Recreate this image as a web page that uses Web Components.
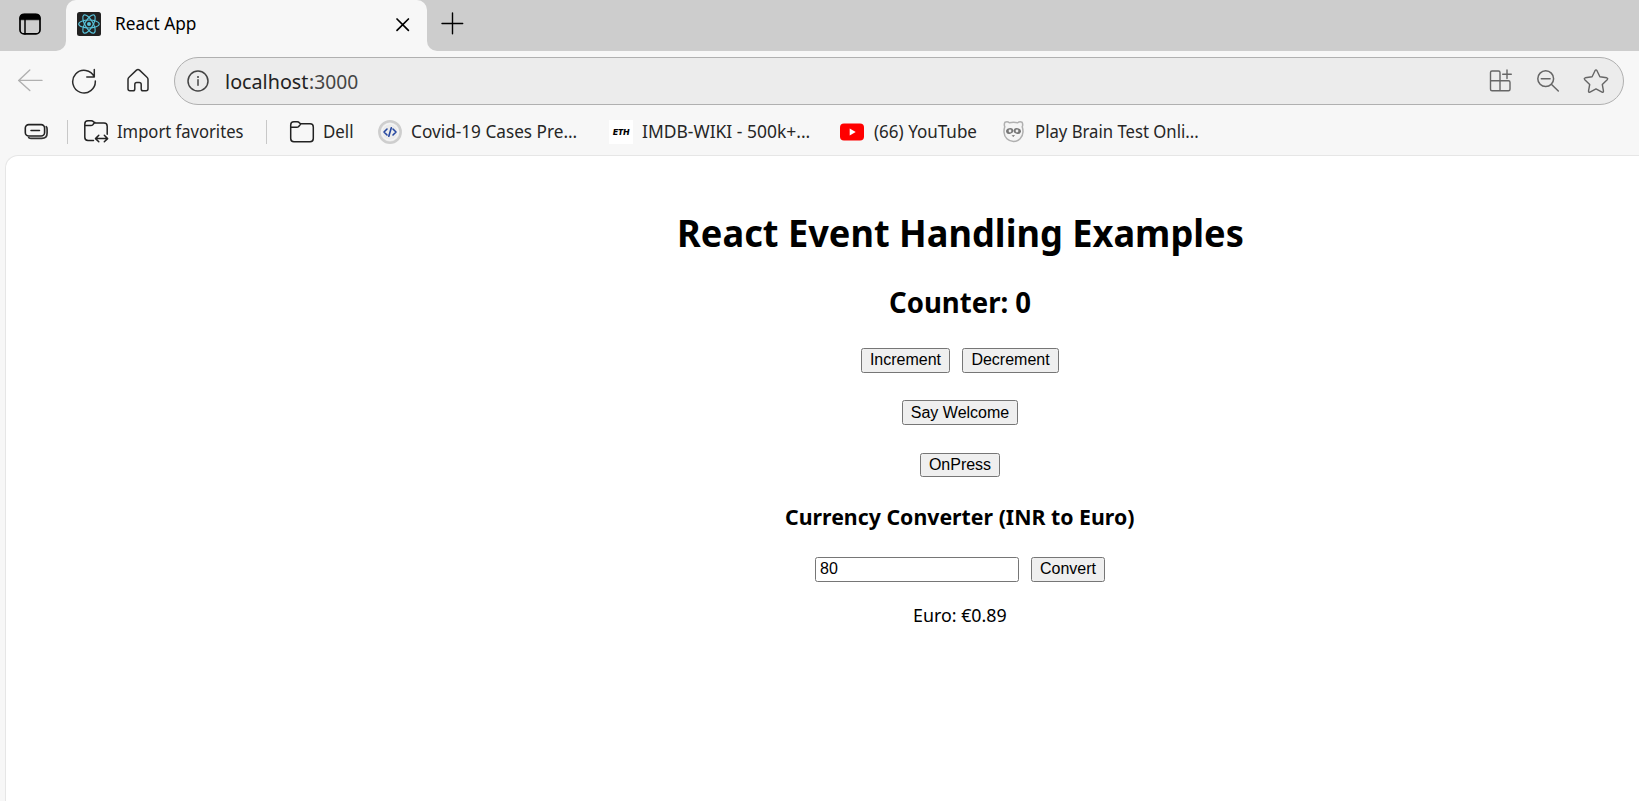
<!DOCTYPE html>
<html lang="en">
<head>
<meta charset="utf-8">
<title>React App</title>
<style>
html,body{margin:0;height:100%;overflow:hidden;background:#f7f7f7;font-family:"Noto Sans","Open Sans",sans-serif;color:#000}
</style>
</head>
<body>
<browser-window></browser-window>
<script>
const shadow = (el, html) => { const t = document.createElement('template'); t.innerHTML = html; el.attachShadow({mode:'open'}).append(t.content.cloneNode(true)); };

/* A single line of text whose glyphs span exactly `w` pixels. */
class FitText extends HTMLElement {
  connectedCallback(){
    const w = +this.getAttribute('w');
    shadow(this, `<style>:host{display:block;flex:none;width:${w}px;white-space:nowrap}span{display:inline-block;transform-origin:0 50%}</style><span><slot></slot></span>`);
    const cs = getComputedStyle(this), c = document.createElement('canvas').getContext('2d');
    c.font = `${cs.fontWeight} ${cs.fontSize} ${cs.fontFamily}`;
    const m = c.measureText(this.textContent.trim()), l = m.actualBoundingBoxLeft, s = w / (l + m.actualBoundingBoxRight);
    this.shadowRoot.querySelector('span').style.transform = `translateX(${l*s}px) scaleX(${s})`;
  }
}

/* Icons share the window's pixel grid through their viewBox. */
const icons = {
  workspaces:['18 12 24 24','<rect x="20" y="14.3" width="20" height="19.6" rx="4" stroke-width="1.7"/><path d="M20 19.3V18q0-3.7 4-3.7h12q4 0 4 3.7v1.3z" fill="#000"/><path d="M25 19v15" stroke-width="1.5"/>'],
  react:['77 12 24 24','<rect x="77" y="12" width="24" height="24" rx="2.5" fill="#222" stroke="none"/><g stroke="#58c4dc" stroke-width="1.15"><ellipse cx="89" cy="24" rx="10.3" ry="4"/><ellipse cx="89" cy="24" rx="10.3" ry="4" transform="rotate(60 89 24)"/><ellipse cx="89" cy="24" rx="10.3" ry="4" transform="rotate(120 89 24)"/></g><circle cx="89" cy="24" r="2" fill="#58c4dc" stroke="none"/>'],
  close:['395 17 16 16','<path d="M397 19l11.4 11.4M408.400 19L397 30.400" stroke-width="1.7"/>'],
  plus:['441 12 23 23','<path d="M442 23.500h20.700M452.500 13v20.700" stroke-width="1.4"/>'],
  back:['17 68 26 26','<path d="M42 80.400H18.600M29.800 70L18.700 80.400l11.100 10.200" stroke="#b0b0b0" stroke-width="1.4"/>'],
  refresh:['71 68 26 26','<path d="M94.300 77A11.300 11.300 0 1 0 95.300 81M94.300 69.500V77h-7.500" stroke="#2b2b2b" stroke-width="1.5"/>'],
  home:['125 68 26 26','<path d="M128 79.600q0-1.400 1-2.300l7.500-7.200q1.500-1.300 3 0l7.500 7.200q1 .9 1 2.300V88.700q0 2-2 2h-3q-1.800 0-1.800-1.800v-4.300q0-2-2-2h-2.400q-2 0-2 2v4.300q0 1.800-1.800 1.800h-3q-2 0-2-2z" stroke="#2b2b2b" stroke-width="1.5"/>'],
  info:['186 69 24 24','<circle cx="198" cy="81" r="10" stroke="#444" stroke-width="1.5"/><path d="M198 79.700v5.600" stroke="#444" stroke-width="1.5"/><circle cx="198" cy="76.900" r="1" fill="#444" stroke="none"/>'],
  apps:['1487 68 26 26','<path d="M1500 80.800V72.500q0-1.500-1.500-1.500h-6.500q-1.500 0-1.500 1.500v16.800q0 1.500 1.500 1.500h16.500q1.500 0 1.500-1.500v-7q0-1.500-1.500-1.500h-18M1500 80.800v10M1507 70v8.600M1502.700 74.300h8.600" stroke="#666" stroke-width="1.400"/>'],
  zoomout:['1535 68 26 26','<circle cx="1545.700" cy="78.700" r="7.900" stroke="#666" stroke-width="1.500"/><path d="M1541.300 78.700h8.800M1551.300 84.300l7 6.700" stroke="#666" stroke-width="1.500"/>'],
  star:['1583 68 26 26','<path d="M1595 70.700q1-1.700 2 0l2.900 6.100 6.800 1q1.700.5.500 1.900l-4.900 4.800 1.200 6.600q0 1.600-1.500 1l-6-3.200-6 3.200q-1.500.6-1.500-1l1.200-6.600-4.900-4.800q-1.200-1.400.5-1.900l6.800-1z" stroke="#666" stroke-width="1.400"/>'],
  stack:['23 119 27 26','<rect x="25.300" y="124.600" width="19.300" height="11.400" rx="3.500" stroke="#222" stroke-width="1.600"/><path d="M31 130.400h8.500" stroke="#222" stroke-width="1.500"/><path d="M28.700 137.600q1 .8 2.500.8h10.500q5.400 0 5.400-5.400v-3.700q0-1.800-.9-2.600" stroke="#333" stroke-width="1.700"/>'],
  import:['83 119 26 26','<path d="M93.500 140.400h-5.500q-3.200 0-3.200-3.200v-13.200q0-3.200 3.200-3.200h3.200q1.500 0 2.300 1l1.500 1.300h9q3.200 0 3.200 3.200v8M84.800 125.500h6q1.300 0 2-.8l2-2.400M95.600 138.600h12M98.800 135.300l-3.300 3.300 3.300 3.200M104.300 135.300l3.300 3.300-3.300 3.200" stroke="#222" stroke-width="1.500"/>'],
  folder:['289 119 26 26','<path d="M290.700 125q0-3.200 3.200-3.200h3.200q1.500 0 2.300 1l1.300 1h9.400q3.200 0 3.200 3.200v11.500q0 3.200-3.200 3.200h-16.200q-3.200 0-3.200-3.200zM290.700 127.200h6q1.300 0 2-.8l2-2.300" stroke="#222" stroke-width="1.500"/>'],
  code:['378 120 24 24','<circle cx="390" cy="132" r="10.700" fill="#ebebeb" stroke="#cecece" stroke-width="2.500"/><circle cx="390" cy="132" r="8.300" stroke="#f7f7f7" stroke-width="1"/><path d="M387 129l-3 3 3 3M393 129l3 3-3 3M391.300 127.700l-2.500 8.500" stroke="#2547a0" stroke-width="1.600"/>'],
  youtube:['840 120 24 24','<rect x="840" y="123.500" width="24" height="17" rx="4" fill="#f00" stroke="none"/><path d="M849.700 128.400v7.200l6-3.600z" fill="#fff" stroke="none"/>'],
  raccoon:['1001 119 25 26','<path d="M1005 122.200q2.500-1.200 4.300.6 4.200-1 8.400 0 1.800-1.800 4.300-.6 1.300 2.300.2 4.600.9 2.500.8 5.200c-.3 5.500-4.300 9.500-9.500 9.500s-9.200-4-9.500-9.500q-.1-2.700.8-5.200-1.100-2.300.2-4.600z" fill="#f5f5f5" stroke="#b0b0b0" stroke-width="1.500"/><ellipse cx="1009.700" cy="131" rx="3.700" ry="2.800" fill="#777" stroke="none" transform="rotate(-15 1009.700 131)"/><ellipse cx="1017.300" cy="131" rx="3.700" ry="2.800" fill="#777" stroke="none" transform="rotate(15 1017.300 131)"/><circle cx="1010" cy="131" r="1.400" fill="#eee" stroke="none"/><circle cx="1017" cy="131" r="1.400" fill="#eee" stroke="none"/><path d="M1012.600 135.500h1.800l-.9 1z" fill="#777" stroke="#777" stroke-width=".7"/>']
};
class UiIcon extends HTMLElement {
  connectedCallback(){
    const [vb, body] = icons[this.getAttribute('name')], [,, w, h] = vb.split(' ');
    shadow(this, `<style>:host{display:block;flex:none;width:${w}px;height:${h}px}svg{display:block}</style><svg width="${w}" height="${h}" viewBox="${vb}" fill="none" stroke="#000" stroke-linecap="round" stroke-linejoin="round">${body}</svg>`);
  }
}

class TabStrip extends HTMLElement {
  connectedCallback(){ shadow(this, `<style>
:host{display:flex;height:51px;background:#f7f7f7;font-size:17.7px}
.left{width:66px;background:#cdcdcd;border-radius:0 0 10px 0;box-sizing:border-box;padding:12px 0 0 18px}
.wrap{width:361px;background:linear-gradient(#cdcdcd 50%,#f7f7f7 50%)}
.tab{display:flex;height:51px;background:#f7f7f7;border-radius:10px 10px 0 0;box-sizing:border-box;padding:0 16px 0 11px}
.tab ui-icon{margin-top:12px}.tab fit-text{margin-left:15px;line-height:47px}.tab .x{margin:17px 0 0 auto}
.right{flex:1;background:#cdcdcd;border-radius:0 0 0 10px;padding:12px 0 0 14px}
</style><div class="left"><ui-icon name="workspaces"></ui-icon></div>
<div class="wrap"><div class="tab"><ui-icon name="react"></ui-icon><fit-text w="79.500">React App</fit-text><ui-icon class="x" name="close"></ui-icon></div></div>
<div class="right"><ui-icon name="plus"></ui-icon></div>`); }
}
class AddressBar extends HTMLElement {
  connectedCallback(){ shadow(this, `<style>
:host{display:flex;height:60px;align-items:center;padding-left:17px;color:#222}
.g{margin-left:28px}
.pill{display:flex;align-items:center;box-sizing:border-box;width:1450px;height:48px;margin-left:23px;border:1.5px solid #b0b0b0;border-radius:24px;background:#ececec;padding:0 14px 0 11px;font-size:20.5px;line-height:46px}
.url{display:flex;margin-left:16px;gap:1.500px}.port{color:#444}
.tools{display:flex;gap:22px;margin-left:auto}
</style><ui-icon name="back"></ui-icon><ui-icon class="g" name="refresh"></ui-icon><ui-icon class="g" name="home"></ui-icon>
<div class="pill"><ui-icon name="info"></ui-icon><div class="url"><fit-text w="82">localhost</fit-text><fit-text class="port" w="47.500">:3000</fit-text></div>
<div class="tools"><ui-icon name="apps"></ui-icon><ui-icon name="zoomout"></ui-icon><ui-icon name="star"></ui-icon></div></div>`); }
}
class BookmarkItem extends HTMLElement {
  connectedCallback(){ shadow(this, `<style>:host{display:flex;align-items:center}slot{display:block}</style><slot name="icon"></slot><slot></slot>`); }
}
class BookmarksBar extends HTMLElement {
  connectedCallback(){ shadow(this, `<style>
:host{display:flex;height:44px;align-items:center;padding-left:23px;padding-bottom:2px;box-sizing:border-box;font-size:17.700px;line-height:24px;color:#262626}
i{width:1px;height:24px;background:#c8c8c8;margin-left:17px}
bookmark-item fit-text{margin-bottom:2px}
.eth{width:24px;height:24px;background:#fff;color:#000;font:italic 900 8px/24px Inter,"Liberation Sans",sans-serif;text-align:center;letter-spacing:-.2px}
</style><ui-icon name="stack"></ui-icon><i></i>
<bookmark-item style="margin-left:15px"><ui-icon slot="icon" name="import"></ui-icon><fit-text style="margin-left:8px" w="126">Import favorites</fit-text></bookmark-item><i style="margin-left:23px"></i>
<bookmark-item style="margin-left:22px"><ui-icon slot="icon" name="folder"></ui-icon><fit-text style="margin-left:9px" w="29">Dell</fit-text></bookmark-item>
<bookmark-item style="margin-left:25px"><ui-icon slot="icon" name="code"></ui-icon><fit-text style="margin-left:9.500px" w="164.500">Covid-19 Cases Pre...</fit-text></bookmark-item>
<bookmark-item style="margin-left:33px"><div slot="icon" class="eth">ETH</div><fit-text style="margin-left:9px" w="167.500">IMDB-WIKI - 500k+...</fit-text></bookmark-item>
<bookmark-item style="margin-left:30.500px"><ui-icon slot="icon" name="youtube"></ui-icon><fit-text style="margin-left:9.500px" w="103">(66) YouTube</fit-text></bookmark-item>
<bookmark-item style="margin-left:24.500px"><ui-icon slot="icon" name="raccoon"></ui-icon><fit-text style="margin-left:10px" w="162">Play Brain Test Onli...</fit-text></bookmark-item>`); }
}
class UiButton extends HTMLElement {
  connectedCallback(){ shadow(this, `<style>:host{display:block}button{display:block;box-sizing:border-box;width:${this.getAttribute('w')}px;height:${this.getAttribute('h')||25}px;margin:0;padding:0 0 var(--lift,1px);border:1px solid #767676;border-radius:2.500px;background:#efefef;color:#000;font:16px/20px "Liberation Sans",Arial,sans-serif;white-space:nowrap}</style><button><slot></slot></button>`); }
}
class EventExamples extends HTMLElement {
  connectedCallback(){ shadow(this, `<style>
:host{display:block;flex:1;margin-left:5px;border:1px solid #e6e6e6;border-width:1px 0 0 1px;border-radius:13px 0 0 0;background:#fff;overflow:hidden}
main{width:1908px;padding-top:51px;display:flex;flex-direction:column;align-items:center}
h1,h2,h3,p{margin:0}h1{font-size:37.600px;line-height:52px;padding-left:2px}h2{font-size:28.200px;line-height:38px;margin-top:24px}
h3{font-size:22px;line-height:30px;margin-top:24px}p{font-size:18.800px;line-height:26px;margin-top:20px}
.row{display:flex;gap:12px}
input{display:block;box-sizing:border-box;width:204px;height:25px;margin:0;border:1px solid #767676;border-radius:2.500px;padding:0 3px 2px 4px;font:16px "Liberation Sans",Arial,sans-serif;color:#000;background:#fff}
</style><main><h1><fit-text w="563">React Event Handling Examples</fit-text></h1>
<h2><fit-text w="141">Counter: 0</fit-text></h2>
<div class="row" style="margin-top:27px"><ui-button w="89">Increment</ui-button><ui-button w="97">Decrement</ui-button></div>
<ui-button style="margin-top:27px;--lift:0px" w="116">Say Welcome</ui-button>
<ui-button style="margin-top:28px" w="80" h="24">OnPress</ui-button>
<h3><fit-text w="348">Currency Converter (INR to Euro)</fit-text></h3>
<div class="row" style="margin-top:26px"><input value="80"><ui-button w="74">Convert</ui-button></div>
<p><fit-text w="92">Euro: €0.89</fit-text></p></main>`); }
}
class BrowserWindow extends HTMLElement {
  connectedCallback(){ shadow(this, `<style>:host{display:flex;flex-direction:column;width:1639px;height:801px;overflow:hidden}tab-strip,address-bar,bookmarks-bar{flex:none}</style><tab-strip></tab-strip><address-bar></address-bar><bookmarks-bar></bookmarks-bar><event-examples></event-examples>`); }
}
customElements.define('fit-text', FitText);
customElements.define('ui-icon', UiIcon);
customElements.define('ui-button', UiButton);
customElements.define('bookmark-item', BookmarkItem);
customElements.define('tab-strip', TabStrip);
customElements.define('address-bar', AddressBar);
customElements.define('bookmarks-bar', BookmarksBar);
customElements.define('event-examples', EventExamples);
customElements.define('browser-window', BrowserWindow);
</script>
</body>
</html>
